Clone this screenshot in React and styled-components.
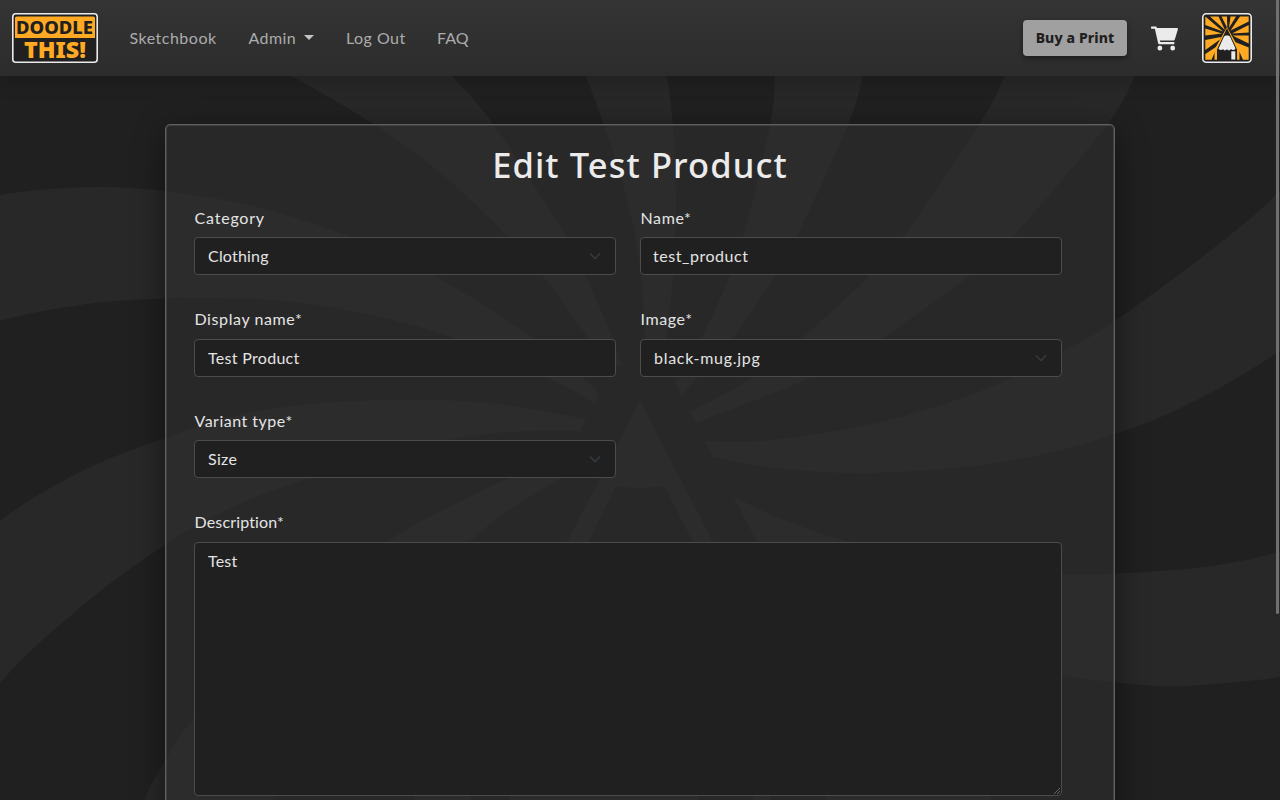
import React from "react";
import styled, { createGlobalStyle } from "styled-components";

const GlobalStyle = createGlobalStyle`
  *, *::before, *::after { box-sizing: border-box; }
  html, body { margin: 0; height: 100%; overflow: hidden; background: #202020; }
  body { font: 400 16px/24px Lato, "Liberation Sans", sans-serif; color: #e4e4e4; }
`;

const Page = styled.div`
  position: relative;
  isolation: isolate;
  height: 800px;
  overflow: hidden;
  display: flex;
  flex-direction: column;
`;

const Backdrop = styled.svg`
  position: absolute;
  inset: 0;
  z-index: -1;
  width: 1280px;
  height: 800px;
  fill: #282828;
`;

const Header = styled.header`
  flex: none;
  display: flex;
  align-items: center;
  height: 76px;
  padding: 0 28px 0 12px;
  background: linear-gradient(#343434, #2c2c2c);
  box-shadow: 0 8px 16px rgba(0, 0, 0, 0.15);
`;

const Nav = styled.nav`
  display: flex;
  align-items: center;
  gap: 32px;
  margin-left: 31.5px;
  flex: 1;
`;

const NavLink = styled.a`
  display: flex;
  align-items: center;
  width: ${(p) => p.$width}px;
  letter-spacing: ${(p) => p.$tracking}px;
  white-space: nowrap;
  color: #acacac;
`;

const Caret = styled.span`
  margin: -2px 0 0 8px;
  border-top: 5px solid #c4c4c4;
  border-left: 5px solid transparent;
  border-right: 5px solid transparent;
`;

const BuyButton = styled.button`
  width: 104px;
  height: 36px;
  padding: 0;
  border: 0;
  border-radius: 4px;
  background: #a0a0a0;
  color: #202020;
  font: 800 14px/36px "Noto Sans", sans-serif;
  letter-spacing: 0.1px;
  white-space: nowrap;
  box-shadow: 0 2px 5px rgba(0, 0, 0, 0.45);
`;

const CartIcon = styled.svg`
  width: 27px;
  height: 25px;
  margin: 0 24px 0 24px;
  fill: #ebebeb;
`;

const Main = styled.main`
  display: flex;
  justify-content: center;
  padding-top: 48px;
`;

const Card = styled.section`
  width: 950px;
  height: 900px;
  padding: 18px 52px 0 28px;
  border: 1px solid #606060;
  border-radius: 5px;
  background: rgba(48, 48, 48, 0.5);
  box-shadow: inset 0 0 0 1px #404040, 0 8px 32px rgba(0, 0, 0, 0.45);
`;

const Title = styled.h1`
  margin: 0 -24px 0 0;
  height: 62.5px;
  text-align: center;
  color: #ebebeb;
  font: 500 34.5px/44px "Noto Sans", sans-serif;
  letter-spacing: ${(p) => p.$tracking}px;
`;

const Form = styled.form`
  display: grid;
  grid-template-columns: 422px 422px;
  column-gap: 24px;
  row-gap: 31.6px;
`;

const Field = styled.div`
  display: flex;
  flex-direction: column;
  height: ${(p) => (p.$wide ? 300 : 70)}px;
  grid-column: ${(p) => (p.$wide ? "1 / -1" : "auto")};
`;

const Label = styled.label`
  height: 31.5px;
  padding-left: 0.5px;
  letter-spacing: ${(p) => p.$tracking}px;
`;

const Control = styled.div`
  display: flex;
  justify-content: space-between;
  height: ${(p) => (p.$tall ? 254 : 38)}px;
  padding: 6px 13px 6px ${(p) => (p.$select ? 13 : 12)}px;
  border: 1px solid #4c4c4c;
  border-radius: 4px;
  background: #202020;
  letter-spacing: ${(p) => p.$tracking}px;
`;

const Chevron = styled.svg`
  width: 12px;
  height: 12px;
  margin-top: 6px;
  margin-right: 1px;
  fill: none;
  stroke: #343a40;
  stroke-width: 1.6;
`;

const ResizeGrip = styled.svg`
  align-self: flex-end;
  width: 6px;
  height: 6px;
  margin: 0 -12px -5px 0;
  stroke: #666;
`;

const ScrollThumb = styled.div`
  position: absolute;
  top: 0;
  right: 1px;
  width: 3px;
  height: 614px;
  border-radius: 0 0 2px 2px;
  background: #707070;
`;

const curve = (pts) => {
  let d = "";
  for (let i = 0; i < pts.length - 1; i++) {
    const a = pts[Math.max(i - 1, 0)];
    const b = pts[i];
    const c = pts[i + 1];
    const e = pts[Math.min(i + 2, pts.length - 1)];
    d += ` C${b[0] + (c[0] - a[0]) / 6} ${b[1] + (c[1] - a[1]) / 6} ${c[0] - (e[0] - b[0]) / 6} ${c[1] - (e[1] - b[1]) / 6} ${c[0]} ${c[1]}`;
  }
  return d;
};

// Each ray is a pair of edges, both listed from the outside towards the pencil.
const rays = [
  [[[-80, 215], [0, 195], [94, 187], [180, 193], [265, 209], [351, 237], [435, 276], [535, 339], [582, 377], [599, 393]],
   [[-80, 350], [0, 321], [80, 305], [150, 299], [216, 298], [294, 302], [375, 316], [457, 339], [547, 377], [595, 404]]],
  [[[-80, 597], [0, 521], [82, 471], [165, 438], [230, 417], [310, 404], [400, 400], [490, 403], [586, 419]],
   [[-80, 790], [0, 683], [82, 606], [165, 545], [235, 506], [306, 479], [375, 456], [449, 440], [510, 432], [580, 431]]],
  [[[120, 860], [144, 800], [165, 761], [194, 718], [280, 625], [386, 542], [506, 479], [560, 460]],
   [[272, 800], [340, 680], [469, 542], [559, 479], [572, 470]]],
  [[[292, 76], [375, 125], [445, 177], [508, 237], [543, 276], [589, 339], [611, 369]],
   [[452, 76], [494, 125], [567, 237], [586, 276], [613, 339], [621, 365]]],
  [[[586, 76], [604, 125], [628, 203], [640, 267], [645, 339], [646, 365]],
   [[667, 76], [673, 125], [676, 203], [673, 276], [666, 339], [658, 370]]],
  [[[775, 76], [770, 125], [743, 237], [730, 276], [701, 339], [675, 383]],
   [[863, 76], [848, 125], [797, 237], [775, 276], [732, 339], [698, 377], [682, 396]]],
  [[[1005, 76], [979, 125], [903, 237], [869, 276], [801, 339], [754, 377], [690, 412]],
   [[1135, 76], [1107, 125], [1013, 237], [969, 276], [881, 339], [813, 377], [696, 423]]],
  [[[1340, 110], [1280, 190], [1211, 250], [1113, 322], [1062, 352], [1007, 380], [935, 407], [852, 428], [762, 441], [705, 441]],
   [[1340, 305], [1280, 351], [1197, 400], [1113, 435], [1003, 462], [873, 473], [775, 468], [713, 457]]],
  [[[1350, 530], [1280, 552], [1211, 566], [1130, 573], [1062, 574], [950, 566], [850, 542], [779, 518], [733, 496]],
   [[1350, 660], [1280, 677], [1179, 686], [1114, 682], [1062, 674], [950, 640], [840, 590], [757, 542]]],
];

const rayPath = ([a, b]) => {
  const back = [...b].reverse();
  return `M${a[0]}${curve(a)} L${back[0]}${curve(back)} Z`;
};

function Swirl() {
  return (
    <Backdrop viewBox="0 0 1280 800">
      {rays.map((r, i) => <path key={i} d={rayPath(r)} />)}
      <path d="M640 400L713 542L770 650H746L693 542L664 486Q640 490 616 486L588 542L534 650H510L567 542Z" />
      <path d="M415 800V796H471V800ZM510 800V796H698V800ZM753 800V796H770V800ZM827 800V796H991V800Z" />
    </Backdrop>
  );
}

function Wordmark() {
  return (
    <svg width="86" height="50" viewBox="0 0 86 50">
      <rect x="0.8" y="0.8" width="84.4" height="48.4" rx="3" fill="#202020" stroke="#ebebeb" strokeWidth="1.6" />
      <path d="M3 5a1.5 1.5 0 0 1 1.5-1.5h77A1.5 1.5 0 0 1 83 5v20H3z" fill="#ffaa22" />
      <g fontFamily="Noto Sans, sans-serif">
        <text x="4" y="20.8" fontSize="18" fontWeight="800" textLength="77" lengthAdjust="spacingAndGlyphs" fill="#202020">DOODLE</text>
        <text x="12" y="44.8" fontSize="23.5" fontWeight="900" textLength="62" lengthAdjust="spacingAndGlyphs" fill="#ffaa22">THIS!</text>
      </g>
    </svg>
  );
}

function PencilBadge() {
  return (
    <svg width="50" height="50" viewBox="0 0 50 50">
      <rect x="0.8" y="0.8" width="48.4" height="48.4" rx="3.5" fill="#202020" stroke="#ebebeb" strokeWidth="1.6" />
      <g fill="#ffaa22">
        <path d="M8 3.5h8.5L23 17z" />
        <path d="M19.500 3.500h5.500l0.300 11.500z" />
        <path d="M28.500 3.500h5.500L27 15z" />
        <path d="M38 3.500h8.700v5L28.500 17.500z" />
        <path d="M3.300 3.500v8.500L21 18.500z" />
        <path d="M3.300 15.500v7L20 20.500z" />
        <path d="M46.700 12v7.500L30 20.500z" />
        <path d="M46.700 22.500v8L30.500 22.500z" />
        <path d="M3.300 27v10L18 26.500l1-2.500z" />
        <path d="M3.300 41v5.700H9.500L15.500 33z" />
        <path d="M46.700 34.500v12.200H41L33 29z" />
        <path d="M12.500 46.700h2.500v-9L25 18l10 19.700v9h2.500V36.500L25 14L12.500 36.500z" />
      </g>
      <path d="M25 15l-10 21.500v10.200h20V36.500z" fill="#202020" />
      <path d="M25 22.500c1.500 0 2.500 0.300 3.200 1.500l5.300 11.500c-1.500 2-3.200 1.800-4.500 0.500c-1.200 1.800-2.800 1.800-4 0.300c-1.200 1.500-2.800 1.500-4 0c-1.300 1-3 1-4.500-0.500L21.800 24c0.700-1.200 1.700-1.500 3.200-1.500z" fill="#ebebeb" />
      <path d="M29.300 38.300h4v8.200h-4z" fill="#ebebeb" />
    </svg>
  );
}

function SelectChevron() {
  return (
    <Chevron viewBox="0 0 12 12">
      <path d="M1 3.500l5 5l5-5" />
    </Chevron>
  );
}

export default function App() {
  return (
    <Page>
      <GlobalStyle />
      <Swirl />
      <Header>
        <Wordmark />
        <Nav>
          <NavLink $width={87} $tracking={0.5}>Sketchbook</NavLink>
          <NavLink $width={65.500} $tracking={0.4}>Admin<Caret /></NavLink>
          <NavLink $width={59} $tracking={0.45}>Log Out</NavLink>
          <NavLink $width={32} $tracking={0.1}>FAQ</NavLink>
        </Nav>
        <BuyButton>Buy a Print</BuyButton>
        <CartIcon viewBox="0 0 28 25" preserveAspectRatio="none">
          <path d="M0.800 0.500h4.700l0.600 1.500H27c0.700 0 1.100 0.500 0.900 1.200l-3.200 10.300c-0.200 0.700-0.700 1-1.300 1H9.300l0.300 1.500h14.600v2.200H8.700c-0.700 0-1.100-0.300-1.300-1L4 2.800H0.800C0.200 2.800 0 2.300 0 1.700S0.200 0.500 0.800 0.500z" />
          <circle cx="9.200" cy="22" r="2.500" />
          <circle cx="22.500" cy="22" r="2.500" />
        </CartIcon>
        <PencilBadge />
      </Header>
      <Main>
        <Card>
          <Title $tracking={1.1}>Edit Test Product</Title>
          <Form>
            <Field>
              <Label $tracking={0.8}>Category</Label>
              <Control $select $tracking={0.2}>Clothing<SelectChevron /></Control>
            </Field>
            <Field>
              <Label $tracking={0.6}>Name*</Label>
              <Control $tracking={0.55}>test_product</Control>
            </Field>
            <Field>
              <Label $tracking={0.6}>Display name*</Label>
              <Control $select $tracking={0.3}>Test Product</Control>
            </Field>
            <Field>
              <Label $tracking={0.6}>Image*</Label>
              <Control $select $tracking={0.7}>black-mug.jpg<SelectChevron /></Control>
            </Field>
            <Field>
              <Label $tracking={0.5}>Variant type*</Label>
              <Control $select $tracking={0.3}>Size<SelectChevron /></Control>
            </Field>
            <Field $wide>
              <Label $tracking={0.15}>Description*</Label>
              <Control $select $tall $tracking={0.2}>
                Test
                <ResizeGrip viewBox="0 0 6 6"><path d="M0 6L6 0M3 6L6 3" /></ResizeGrip>
              </Control>
            </Field>
          </Form>
        </Card>
      </Main>
      <ScrollThumb />
    </Page>
  );
}
